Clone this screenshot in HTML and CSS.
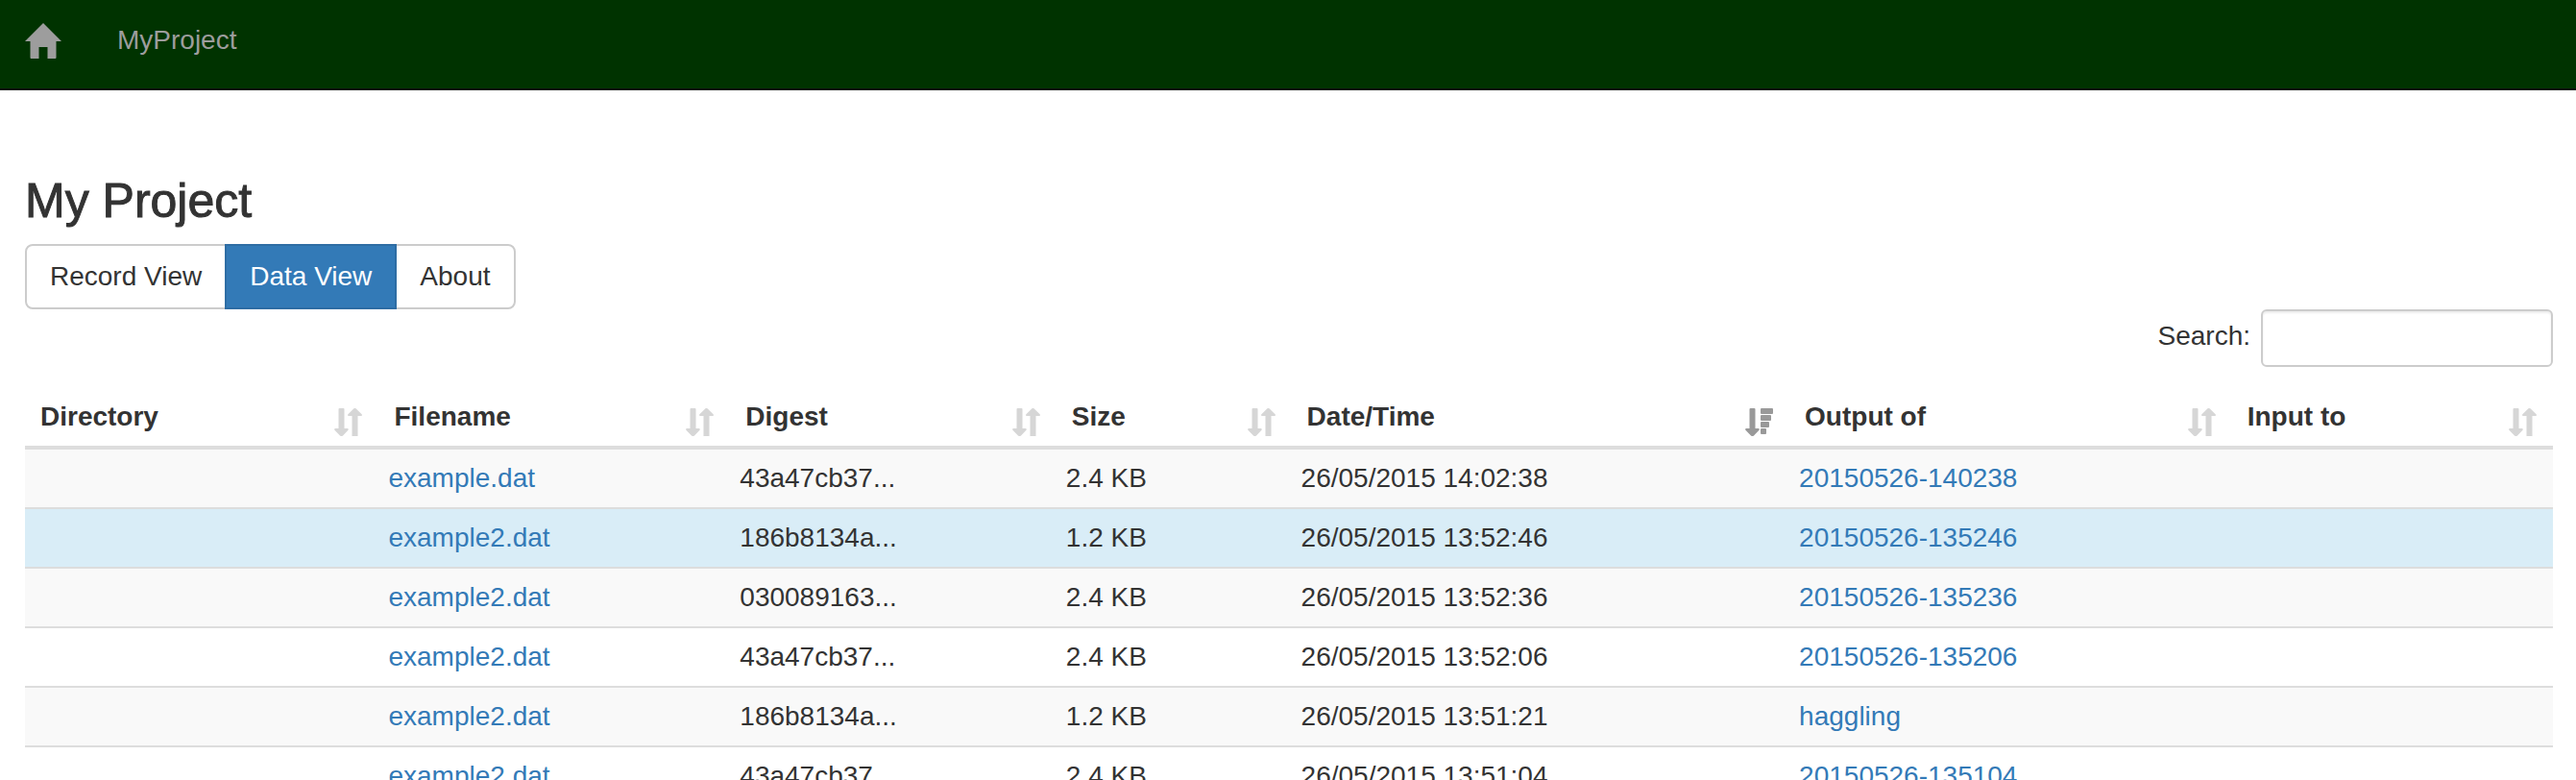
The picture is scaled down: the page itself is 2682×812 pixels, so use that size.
FILE: index.html
```html
<!DOCTYPE html>
<html lang="en">
<head>
<meta charset="utf-8">
<title>My Project</title>
<link rel="stylesheet" href="styles.css">
</head>
<body>
<svg class="sprite" aria-hidden="true">
  <symbol id="sort-both" viewBox="0 0 29 29">
    <path d="M5.500 0h4a1 1 0 0 1 1 1v20h3.200a1 1 0 0 1 .8 1.700L9 28.600q-.4.4-.8.4H6.800q-.4 0-.8-.4L.4 22.700A1 1 0 0 1 1.200 21H4.500V1a1 1 0 0 1 1-1z"/>
    <path d="M18.500 29V8h-3.300a1 1 0 0 1-.8-1.700L20.200.4q.4-.4.8-.4h1q.4 0 .8.4l5.800 5.900A1 1 0 0 1 27.800 8h-3.300v21z"/>
  </symbol>
  <symbol id="sort-desc" viewBox="0 0 29 29">
    <path d="M5.500 0h4a1 1 0 0 1 1 1v20h3.200a1 1 0 0 1 .8 1.700L9 28.600q-.4.4-.8.4H6.800q-.4 0-.8-.4L.4 22.700A1 1 0 0 1 1.200 21H4.500V1a1 1 0 0 1 1-1z"/>
    <rect x="16" y="0" width="13" height="6" rx="1"/>
    <rect x="16" y="7" width="11" height="6" rx="1"/>
    <rect x="16" y="14" width="9" height="6" rx="1"/>
    <rect x="16" y="21" width="6" height="6" rx="1"/>
  </symbol>
</svg>

<nav class="navbar">
  <a class="nav-link" href="#" aria-label="Home">
    <svg class="home-icon" viewBox="0 0 38 37" aria-hidden="true"><path d="M19 0 38 19H32.500V36q0 1-1 1H23.500V25H14.500V37H6.500q-1 0-1-1V19H0z"/></svg>
  </a>
  <a class="nav-link" href="#">MyProject</a>
</nav>

<main class="content">
  <h1 class="title">My Project</h1>
  <div class="btn-group">
    <button class="btn" type="button">Record View</button>
    <button class="btn btn-active" type="button">Data View</button>
    <button class="btn" type="button">About</button>
  </div>

  <div class="filter">
    <label class="filter-label" for="search">Search:</label>
    <input class="filter-input" id="search" type="search">
  </div>

  <table class="data-table">
    <colgroup>
      <col class="col-directory"><col class="col-filename"><col class="col-digest"><col class="col-size"><col class="col-date"><col class="col-output"><col>
    </colgroup>
    <thead>
      <tr>
        <th scope="col"><button class="sort" type="button">Directory<svg class="sort-icon"><use href="#sort-both"/></svg></button></th>
        <th scope="col"><button class="sort" type="button">Filename<svg class="sort-icon"><use href="#sort-both"/></svg></button></th>
        <th scope="col"><button class="sort" type="button">Digest<svg class="sort-icon"><use href="#sort-both"/></svg></button></th>
        <th scope="col"><button class="sort" type="button">Size<svg class="sort-icon"><use href="#sort-both"/></svg></button></th>
        <th scope="col" aria-sort="descending"><button class="sort" type="button">Date/Time<svg class="sort-icon sorted"><use href="#sort-desc"/></svg></button></th>
        <th scope="col"><button class="sort" type="button">Output of<svg class="sort-icon"><use href="#sort-both"/></svg></button></th>
        <th scope="col"><button class="sort" type="button">Input to<svg class="sort-icon"><use href="#sort-both"/></svg></button></th>
      </tr>
    </thead>
    <tbody>
      <tr><td></td><td><a href="#">example.dat</a></td><td>43a47cb37...</td><td>2.4 KB</td><td>26/05/2015 14:02:38</td><td><a href="#">20150526-140238</a></td><td></td></tr>
      <tr class="info"><td></td><td><a href="#">example2.dat</a></td><td>186b8134a...</td><td>1.2 KB</td><td>26/05/2015 13:52:46</td><td><a href="#">20150526-135246</a></td><td></td></tr>
      <tr><td></td><td><a href="#">example2.dat</a></td><td>030089163...</td><td>2.4 KB</td><td>26/05/2015 13:52:36</td><td><a href="#">20150526-135236</a></td><td></td></tr>
      <tr><td></td><td><a href="#">example2.dat</a></td><td>43a47cb37...</td><td>2.4 KB</td><td>26/05/2015 13:52:06</td><td><a href="#">20150526-135206</a></td><td></td></tr>
      <tr><td></td><td><a href="#">example2.dat</a></td><td>186b8134a...</td><td>1.2 KB</td><td>26/05/2015 13:51:21</td><td><a href="#">haggling</a></td><td></td></tr>
      <tr><td></td><td><a href="#">example2.dat</a></td><td>43a47cb37...</td><td>2.4 KB</td><td>26/05/2015 13:51:04</td><td><a href="#">20150526-135104</a></td><td></td></tr>
    </tbody>
  </table>
</main>
</body>
</html>
```

FILE: styles.css
```css
* {
  box-sizing: border-box;
}

body {
  margin: 0;
  height: 100vh;
  overflow: hidden;
  background: #fff;
  color: #333;
  font: 28px/40px "Helvetica Neue", Helvetica, "Liberation Sans", Arial, sans-serif;
}

button,
input {
  font: inherit;
  color: inherit;
}

a {
  color: #337ab7;
  text-decoration: none;
}

.sprite {
  display: none;
}

/* Navigation bar */
.navbar {
  display: flex;
  align-items: center;
  gap: 58px;
  padding: 22px 26px 30px;
  background: #030;
  border-bottom: 2px solid #080808;
}

.nav-link {
  display: flex;
  align-items: center;
  color: #9d9d9d;
}

.home-icon {
  width: 38px;
  height: 37px;
  fill: currentColor;
}

.content {
  padding: 88px 24px 0 26px;
}

.title {
  margin: 0 0 18px;
  font-size: 50px;
  font-weight: 400;
  line-height: 54px;
  -webkit-text-stroke: 1px currentColor;
}

/* View switcher */
.btn-group {
  display: flex;
}

.btn {
  padding: 12px 24px;
  background: #fff;
  border: 2px solid #ccc;
}

.btn + .btn {
  margin-left: -2px;
}

.btn:first-child {
  border-radius: 8px 0 0 8px;
}

.btn:last-child {
  border-radius: 0 8px 8px 0;
}

.btn-active {
  z-index: 1;
  background: #337ab7;
  border-color: #2e6da4;
  color: #fff;
}

/* Search filter */
.filter {
  display: flex;
  justify-content: flex-end;
  gap: 11px;
  margin-bottom: 32px;
}

.filter-label {
  padding-top: 8px;
}

.filter-input {
  width: 304px;
  height: 60px;
  padding: 10px 20px;
  background: #fff;
  border: 2px solid #ccc;
  border-radius: 6px;
  box-shadow: inset 0 2px 2px rgba(0, 0, 0, 0.075);
  appearance: none;
  outline: none;
}

/* Data table */
.data-table {
  width: 100%;
  table-layout: fixed;
  border-collapse: separate;
  border-spacing: 0;
}

.col-directory {
  width: 14%;
}

.col-filename {
  width: 13.9%;
}

.col-digest {
  width: 12.9%;
}

.col-size {
  width: 9.3%;
}

.col-date {
  width: 19.7%;
}

.col-output {
  width: 17.5%;
}

.data-table th {
  padding: 0 17px 10px 16px;
  border-bottom: 4px solid #ddd;
  font-weight: 700;
}

.sort {
  display: flex;
  justify-content: space-between;
  align-items: flex-end;
  width: 100%;
  padding: 0;
  background: none;
  border: 0;
  text-align: left;
}

.sort-icon {
  width: 29px;
  height: 29px;
  fill: #d6d6d6;
}

.sort-icon.sorted {
  fill: #999;
}

.data-table td {
  height: 62px;
  padding: 10px;
  border-top: 2px solid #ddd;
}

.data-table tbody tr:first-child td {
  height: 60px;
  border-top: 0;
}

.data-table tbody tr:nth-child(odd) {
  background: #f9f9f9;
}

.data-table tbody .info {
  background: #d9edf7;
}
```
